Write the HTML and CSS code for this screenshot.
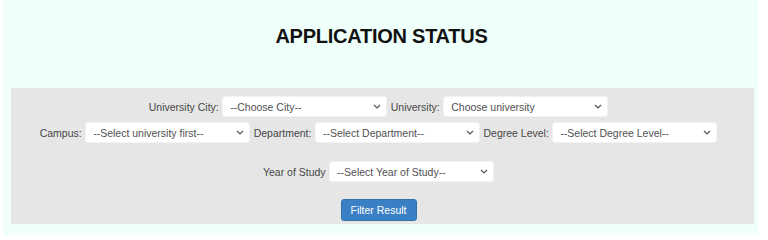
FILE: index.html
```html
<!DOCTYPE html>
<html lang="en">
<head>
<meta charset="utf-8">
<title>Application Status</title>
<link rel="stylesheet" href="styles.css">
</head>
<body>
<div class="page">
  <h1 class="title">APPLICATION STATUS</h1>
  <form class="filter">
    <div class="row">
      <label class="lbl">University City:</label>
      <span class="sel"><select><option>--Choose City--</option></select><svg class="chev" viewBox="0 0 8 5" width="8" height="5"><path d="M1 1 L4 4 L7 1" fill="none" stroke="#555" stroke-width="1.2"/></svg></span>
      <label class="lbl">University:</label>
      <span class="sel"><select><option>Choose university</option></select><svg class="chev" viewBox="0 0 8 5" width="8" height="5"><path d="M1 1 L4 4 L7 1" fill="none" stroke="#555" stroke-width="1.2"/></svg></span>
    </div>
    <div class="row row2">
      <label class="lbl">Campus:</label>
      <span class="sel"><select><option>--Select university first--</option></select><svg class="chev" viewBox="0 0 8 5" width="8" height="5"><path d="M1 1 L4 4 L7 1" fill="none" stroke="#555" stroke-width="1.2"/></svg></span>
      <label class="lbl">Department:</label>
      <span class="sel"><select><option>--Select Department--</option></select><svg class="chev" viewBox="0 0 8 5" width="8" height="5"><path d="M1 1 L4 4 L7 1" fill="none" stroke="#555" stroke-width="1.2"/></svg></span>
      <label class="lbl">Degree Level:</label>
      <span class="sel"><select><option>--Select Degree Level--</option></select><svg class="chev" viewBox="0 0 8 5" width="8" height="5"><path d="M1 1 L4 4 L7 1" fill="none" stroke="#555" stroke-width="1.2"/></svg></span>
    </div>
    <div class="row row3">
      <label class="lbl">Year of Study</label>
      <span class="sel"><select><option>--Select Year of Study--</option></select><svg class="chev" viewBox="0 0 8 5" width="8" height="5"><path d="M1 1 L4 4 L7 1" fill="none" stroke="#555" stroke-width="1.2"/></svg></span>
    </div>
    <div class="row row4">
      <button type="button" class="btn">Filter Result</button>
    </div>
  </form>
</div>
</body>
</html>
```

FILE: styles.css
```css
html, body {
  margin: 0;
  padding: 0;
  background: #ffffff;
}
body {
  font-family: "Liberation Sans", Arial, sans-serif;
  width: 768px;
  height: 235px;
  overflow: hidden;
}
.page {
  margin-left: 3px;
  width: 755px;
  height: 235px;
  background: #effffa;
  padding-top: 24px;
  box-sizing: border-box;
}
.title {
  margin: 0;
  font-size: 20px;
  line-height: 24px;
  font-weight: bold;
  text-align: center;
  color: #111;
  letter-spacing: -0.25px;
  padding-left: 2px;
}
.filter {
  margin: 40px 0 0 8px;
  width: 743px;
  box-sizing: border-box;
  background: #e6e6e6;
  padding: 8px 8px 3px 0;
}
.row {
  display: flex;
  justify-content: center;
  align-items: center;
  gap: 3.5px;
}
.row2 { margin-top: 5px; }
.row3 { margin-top: 18px; }
.row4 { margin-top: 17px; }
.lbl {
  font-size: 10.5px;
  color: #474747;
  white-space: nowrap;
}
.sel {
  position: relative;
  display: block;
  width: 165px;
  height: 21px;
}
.sel select {
  -webkit-appearance: none;
  appearance: none;
  display: block;
  width: 165px;
  height: 21px;
  margin: 0;
  border: 1px solid #f2f2f2;
  border-radius: 3px;
  background: #ffffff;
  font-family: "Liberation Sans", Arial, sans-serif;
  font-size: 10.5px;
  color: #505050;
  padding: 0 0 0 7px;
  box-sizing: border-box;
  outline: none;
}
.chev {
  position: absolute;
  right: 6px;
  top: 8px;
  pointer-events: none;
}
.btn {
  width: 76px;
  height: 22px;
  margin: 0;
  padding: 0;
  border: 1px solid #3070ad;
  border-radius: 3px;
  background: #3a80c4;
  color: #ffffff;
  font-family: "Liberation Sans", Arial, sans-serif;
  font-size: 10.5px;
}
```
